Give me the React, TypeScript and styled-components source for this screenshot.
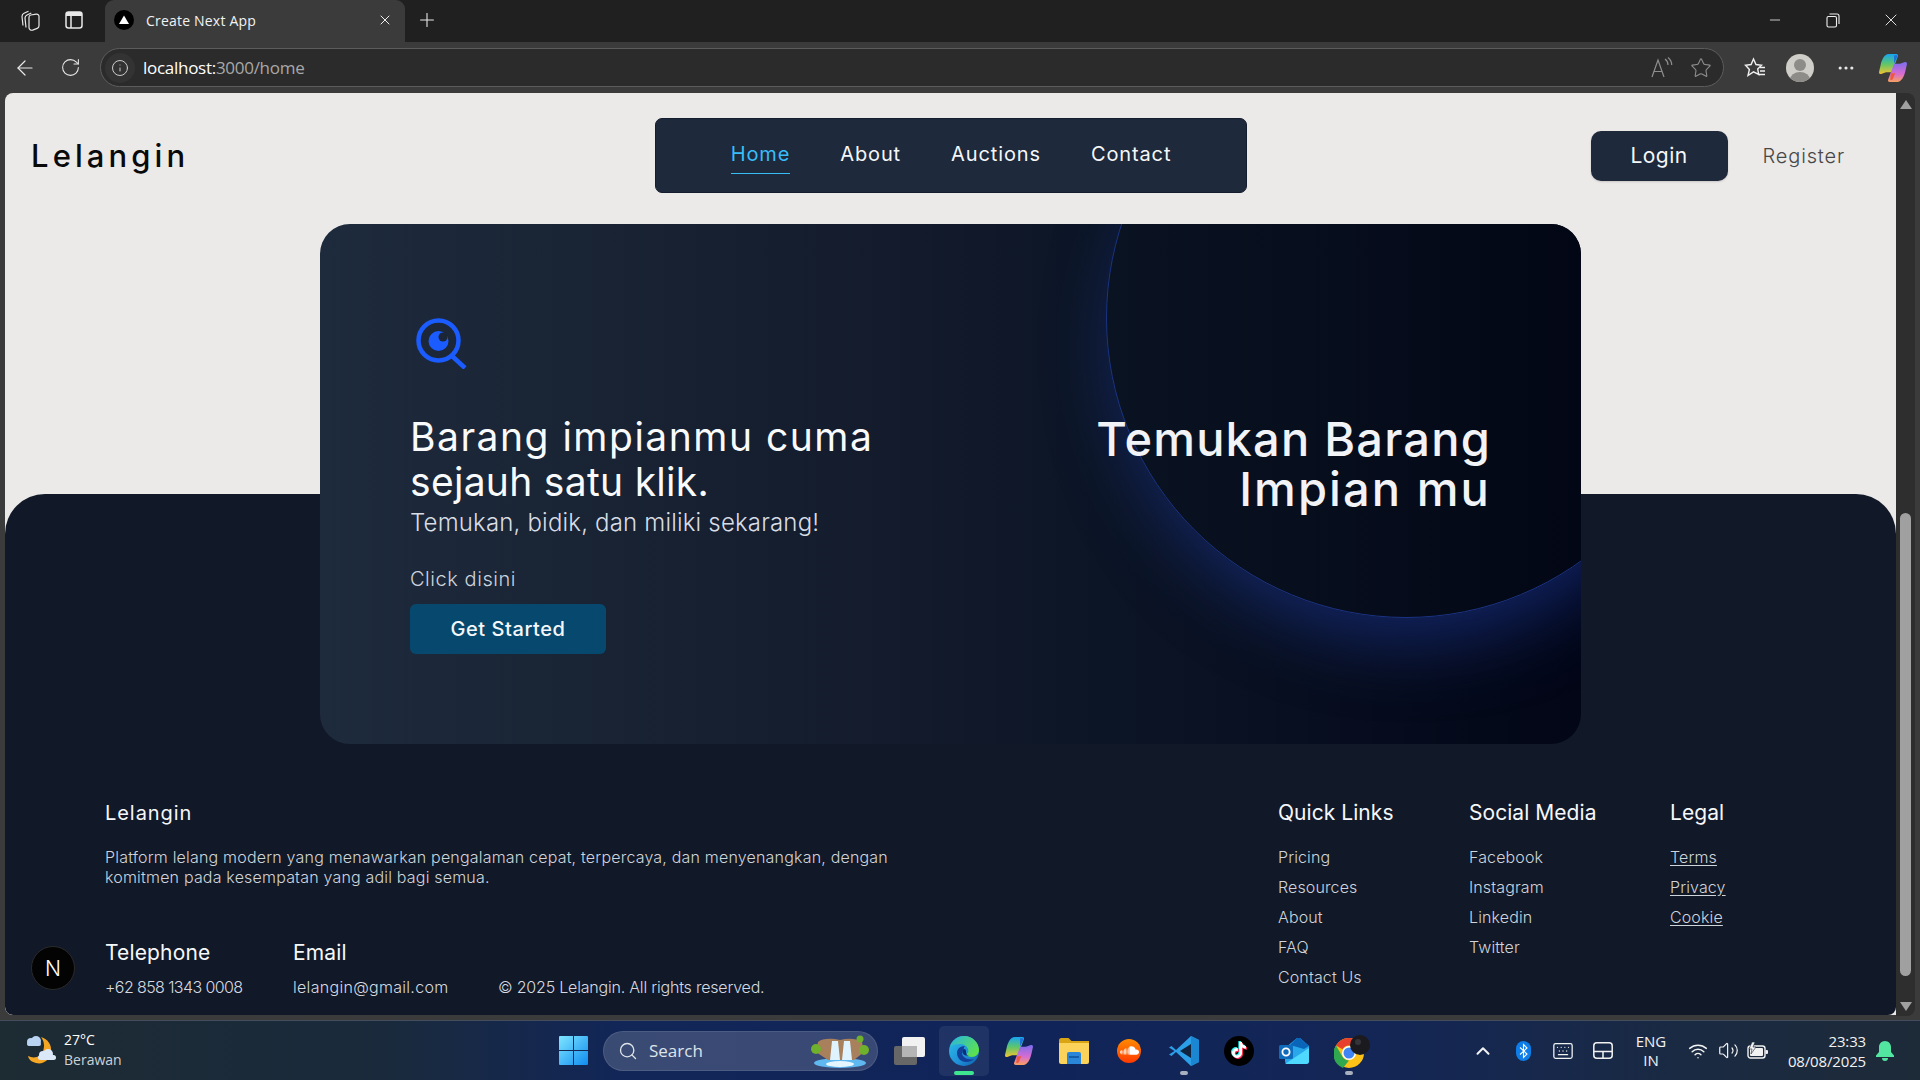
import React from "react";
import styled, { createGlobalStyle } from "styled-components";
import {
  ArrowLeft, RotateCw, Info, Plus, X, Minus, Star, Search, ChevronUp, Keyboard, Wifi, Volume2, MoreHorizontal,
} from "lucide-react";
import { SiSoundcloud, SiTiktok } from "react-icons/si";

const Global = createGlobalStyle`
  html, body { margin: 0; padding: 0; background: #3b3b3b; overflow: hidden; }
  * { box-sizing: border-box; }
`;

const PAGE_FONT = `Inter, "Noto Sans", sans-serif`;
const UI_FONT = `"Open Sans", "Noto Sans", sans-serif`;

const Frame = styled.div`
  width: 1920px; height: 1080px; display: flex; flex-direction: column; overflow: hidden;
  background: #3b3b3b; font-family: ${UI_FONT};
`;

/* ---------- browser chrome ---------- */
const TitleBar = styled.div`
  height: 42px; flex: none; background: #202020; display: flex; align-items: flex-end; color: #f0f0f0;
`;
const ChromeIcon = styled.div<{ $w: number; $color?: string }>`
  width: ${(p) => p.$w}px; height: 100%; flex: none; display: flex; align-items: center; justify-content: center;
  color: ${(p) => p.$color || "#e8e8e8"};
`;
const TitleLeft = styled.div`
  display: flex; height: 42px; width: 105px; flex: none; padding: 0 0 2px 8px;
`;
const Tab = styled.div`
  width: 300px; height: 42px; flex: none; background: #3b3b3b; border-radius: 9px 9px 0 0; display: flex; align-items: center;
  padding: 0 12px 2px 9px; gap: 12px;
`;
const TabTitle = styled.span`
  font-size: 14px; color: #f2f2f2; flex: 1; white-space: nowrap; letter-spacing: 0.2px;
`;
const NewTab = styled.div`
  width: 44px; height: 42px; padding-bottom: 2px; display: flex; align-items: center; justify-content: center; color: #e8e8e8;
`;
const WindowControls = styled.div`
  margin-left: auto; display: flex; height: 42px; padding-bottom: 2px;
`;
const WinButton = styled.div`
  width: 58px; height: 100%; display: flex; align-items: center; justify-content: center; color: #f0f0f0;
`;
const Toolbar = styled.div`
  height: 51px; flex: none; background: #3b3b3b; display: flex; align-items: center; color: #ececec;
`;
const NavIcons = styled.div`
  width: 100px; height: 100%; flex: none; display: flex; align-items: center; padding-left: 3px;
`;
const AddressBar = styled.div`
  width: 1624px; height: 39px; flex: none; background: #2b2b2b; border: 1px solid #5c5c5c; border-radius: 20px;
  display: flex; align-items: center; padding: 0 8px 0 3px;
`;
const InfoChip = styled.div`
  width: 30px; height: 30px; border-radius: 50%; background: #333333; flex: none; display: flex; align-items: center; justify-content: center;
  color: #cfcfcf; margin-left: 1px; margin-right: 8px;
`;
const UrlHost = styled.span`
  font-size: 17px; color: #ffffff; letter-spacing: -0.28px;
`;
const UrlPath = styled.span`
  font-size: 17px; color: #a8a8a8; letter-spacing: -0.28px;
`;
const AddressTools = styled.div`
  margin-left: auto; display: flex; align-items: center; gap: 16px; color: #8e8e8e; padding-right: 3px;
`;
const ToolbarRight = styled.div`
  flex: 1; display: flex; align-items: center; height: 100%; padding-left: 9px;
`;

/* ---------- viewport ---------- */
const Viewport = styled.div`
  flex: none; height: 927px; display: flex; padding-left: 5px; background: #3b3b3b;
`;
const Page = styled.div`
  width: 1891px; height: 922px; background: #ebeae8; border-radius: 8px 0 0 8px; display: flex; flex-direction: column;
  font-family: ${PAGE_FONT}; overflow: hidden;
`;
const ScrollTrack = styled.div`
  width: 19px; height: 923px; background: #2e2e2e; border-radius: 0 8px 8px 0; display: flex; flex-direction: column; align-items: center;
`;
const ScrollArrow = styled.div<{ $down?: boolean }>`
  width: 0; height: 0; border-left: 6px solid transparent; border-right: 6px solid transparent; flex: none;
  ${(p) => (p.$down ? "border-top: 9px solid #a0a0a0;" : "border-bottom: 9px solid #a0a0a0;")}
  margin-top: ${(p) => (p.$down ? "26px" : "7px")};
`;
const ScrollThumb = styled.div`
  width: 11px; height: 463px; border-radius: 6px; background: #a0a0a0; margin-top: 404px; flex: none;
`;

/* header */
const Header = styled.header`
  display: grid; grid-template-columns: 650px 592px 1fr; padding-top: 25px; flex: none;
`;
const Logo = styled.div`
  padding-left: 26px; height: 75px; display: flex; align-items: center; font-size: 31px; font-weight: 500; letter-spacing: 4.1px; color: #0a0a0a;
`;
const NavBox = styled.nav`
  height: 75px; background: #1e293b; border-radius: 7px; border: 1px solid #141d2e; display: flex; align-items: center; justify-content: center; gap: 50px;
`;
const NavLink = styled.a<{ $active?: boolean }>`
  font-size: 20px; line-height: 28px; padding-bottom: 5px; color: ${(p) => (p.$active ? "#38bdf8" : "#f5f7fa")};
  border-bottom: 1px solid ${(p) => (p.$active ? "#38bdf8" : "transparent")};
  margin-top: 2px; letter-spacing: 0.88px;
`;
const Actions = styled.div`
  height: 75px; display: flex; align-items: center; justify-content: flex-end; padding-right: 51px; gap: 35px;
`;
const LoginButton = styled.button`
  width: 137px; height: 50px; border: none; border-radius: 10px; background: #1e293b; color: #f5f7fa; font: 400 21px ${PAGE_FONT};
  box-shadow: 0 1px 2px rgba(0,0,0,.15); letter-spacing: 0.5px;
`;
const RegisterLink = styled.a`
  font-size: 20px; color: #474747; font-weight: 300; letter-spacing: 0.85px;
`;

/* hero */
const Hero = styled.section`
  position: relative; z-index: 1; flex: none; width: 1261px; height: 520px; margin: 31px 0 0 315px; border-radius: 30px; overflow: hidden;
  background: linear-gradient(90deg, #1e2b3c 0%, #131b2c 45%, #0c1526 62%, #020617 100%);
  display: flex; justify-content: space-between; padding: 94px 90px 0 90px; color: #fff;
`;
const Orb = styled.div`
  position: absolute; left: 786px; top: -206px; width: 600px; height: 600px; border-radius: 50%;
  background: linear-gradient(90deg, #0a1322, #020614 85%);
  border: 1px solid #1b3383; box-shadow: 6px 30px 70px -8px rgba(30,58,160,.55);
`;
const HeroLeft = styled.div`
  position: relative; display: flex; flex-direction: column; align-items: flex-start;
`;
const HeroIcon = styled.svg`
  width: 51px; height: 51px; margin-left: 6px; display: block;
`;
const HeroTitle = styled.h1`
  margin: 45px 0 0; font-size: 39px; line-height: 45px; font-weight: 400; color: #f8fafc;
`;
const SpacedLine = styled.span<{ $ls: number }>`
  display: block; white-space: nowrap; letter-spacing: ${(p) => p.$ls}px;
`;
const HeroSub = styled.p`
  margin: 5px 0 0; font-size: 24px; line-height: 28px; font-weight: 300; color: #d8dde5; letter-spacing: 0.18px;
`;
const HeroHint = styled.p`
  margin: 28px 0 0; font-size: 20px; line-height: 28px; font-weight: 300; color: #cdd3dc; letter-spacing: 0.55px;
`;
const HeroButton = styled.button`
  margin-top: 11px; width: 196px; height: 50px; background: #07496e; color: #f5f7fa; border: none; border-radius: 6px;
  font: 500 20px ${PAGE_FONT}; letter-spacing: 0.55px;
`;
const HeroHeadline = styled.h2`
  position: relative; margin: 96px 0 0; font-size: 47px; line-height: 50px; font-weight: 500; color: #f1f3f7; text-align: right;
`;

/* footer */
const Footer = styled.footer`
  flex: 1; margin: -250px 0 0; background: #111827; border-radius: 40px 40px 8px 8px; padding: 309px 0 0 26px;
  display: flex; color: #f5f7fa;
`;
const FooterLeft = styled.div`
  width: 1247px; flex: none; display: flex; flex-direction: column;
`;
const Brand = styled.div`
  margin-left: 74px;
`;
const FooterHeading = styled.h3`
  margin: 0; font-size: 20px; line-height: 20px; font-weight: 400; letter-spacing: 0.95px; color: #f5f7fa;
`;
const Description = styled.p`
  margin: 24px 0 0; width: 800px; font-size: 16px; line-height: 20px; font-weight: 300; color: #cfd4db; letter-spacing: 0.19px;
`;
const ContactRow = styled.div`
  margin-top: 54px; display: grid; grid-template-columns: 74px 188px 205px auto; align-items: end;
`;
const NBadge = styled.div`
  width: 44px; height: 44px; border-radius: 50%; background: #030303; border: 1px solid #2a2a2a; color: #fff; display: flex; align-items: center; justify-content: center;
  font-size: 21px; font-weight: 300; align-self: start; margin-top: 5px;
`;
const ContactHeading = styled.h4`
  margin: 0 0 12px; font-size: 21px; line-height: 24px; font-weight: 400; color: #f5f7fa; letter-spacing: 0.15px;
`;
const SmallText = styled.span<{ $ls: number }>`
  display: block; font-size: 16px; line-height: 20px; font-weight: 300; color: #d6dae0; letter-spacing: ${(p) => p.$ls}px;
`;
const LinkColumns = styled.div`
  display: grid; grid-template-columns: 191px 201px 1fr; flex: 1;
`;
const LinkColumn = styled.div`
  display: flex; flex-direction: column; gap: 10px;
`;
const ColumnHeading = styled(FooterHeading)`
  font-size: 21px; margin-bottom: 14px; letter-spacing: 0.05px;
`;
const FooterLink = styled.a<{ $underline?: boolean }>`
  font-size: 16px; line-height: 20px; font-weight: 300; color: #cfd4db; letter-spacing: 0.12px;
  text-decoration: ${(p) => (p.$underline ? "underline" : "none")}; text-underline-offset: 2px; align-self: flex-start;
`;

/* ---------- taskbar ---------- */
const Taskbar = styled.div`
  flex: none; height: 60px; display: flex; align-items: center; border-top: 1px solid #434d5c; color: #fff;
  background: linear-gradient(90deg, #1d2b33 0%, #1a2a3c 20%, #122657 32%, #10245a 52%, #132655 72%, #1a2a42 88%, #1d2a38 100%);
`;
const TaskLeft = styled.div`
  width: 548px; flex: none; display: flex; align-items: center; padding-left: 23px; gap: 5px;
`;
const WeatherText = styled.div`
  display: flex; flex-direction: column; font-size: 14px; line-height: 20px; margin-top: -2px; letter-spacing: 0;
`;
const WeatherSub = styled.span`
  color: #cdd2d8;
`;
const TaskCenter = styled.div`
  display: flex; align-items: center; gap: 5px;
`;
const TaskSlot = styled.div<{ $active?: boolean; $mark?: string }>`
  position: relative; width: 50px; height: 50px; flex: none; display: flex; align-items: center; justify-content: center; border-radius: 5px;
  background: ${(p) => (p.$active ? "rgba(255,255,255,.07)" : "transparent")};
  &::after {
    content: ""; display: ${(p) => (p.$mark ? "block" : "none")}; position: absolute; bottom: 1px; left: 50%; transform: translateX(-50%);
    width: ${(p) => (p.$active ? "20px" : "8px")}; height: 4px; border-radius: 2px; background: ${(p) => p.$mark};
  }
`;
const SearchPill = styled.div`
  width: 275px; height: 40px; margin-right: 1px; border-radius: 20px; background: rgba(255,255,255,.17); border: 1px solid rgba(255,255,255,.1);
  display: flex; align-items: center; padding-left: 14px; gap: 11px; color: #dfe3ea; font-size: 17px; overflow: hidden;
`;
const PillArt = styled.svg`
  margin-left: auto; margin-right: 7px; width: 60px; height: 34px; flex: none;
`;
const TaskRight = styled.div`
  margin-left: auto; display: flex; align-items: center; height: 100%; padding-right: 16px;
`;
const TrayIcon = styled.div<{ $w: number }>`
  width: ${(p) => p.$w}px; flex: none; display: flex; align-items: center; justify-content: center; color: #f2f2f2;
`;
const LangBox = styled.div`
  width: 56px; margin-right: 4px; flex: none; text-align: center; font-size: 15px; line-height: 19px; color: #f2f2f2;
`;
const ClockBox = styled.div`
  width: 93px; flex: none; text-align: right; font-size: 15px; line-height: 20px; color: #f2f2f2; letter-spacing: -0.15px;
`;

/* drawings */
const Workspaces = () => (
  <svg width="22" height="22" viewBox="0 0 22 22" fill="none" stroke="#e8e8e8" strokeWidth="1.2">
    <path d="M4 16.5 3 7.5c0-1.5.7-2.6 2-3.2l4.5-2" />
    <path d="M7 18.5 6 9c0-1.4.7-2.4 2-3l4.3-2" />
    <path d="M10 8.2c0-1.1.7-2 1.8-2.2l5.5-.8c1.5-.2 2.7.8 2.7 2.3v9.3c0 1.2-.7 2.2-1.8 2.6l-4.6 1.7c-1.8.6-3.6-.6-3.6-2.5z" />
  </svg>
);
const VerticalTabs = () => (
  <svg width="20" height="20" viewBox="0 0 20 20" fill="none">
    <rect x="2" y="2" width="16" height="16" rx="2.5" stroke="#e8e8e8" strokeWidth="1.5" />
    <path d="M2 4.5A2.5 2.5 0 0 1 4.5 2h11A2.5 2.5 0 0 1 18 4.5V6H2z" fill="#e8e8e8" />
    <path d="M7 6v12" stroke="#e8e8e8" strokeWidth="1.5" />
  </svg>
);
const Favicon = () => (
  <svg width="20" height="20" viewBox="0 0 20 20">
    <circle cx="10" cy="10" r="10" fill="#000" />
    <path d="M10 5.5 15 14H5z" fill="#fff" />
  </svg>
);
const Restore = () => (
  <svg width="14" height="15" viewBox="0 0 14 15" fill="none" stroke="#f0f0f0" strokeWidth="1.1">
    <rect x="1" y="3.5" width="9.5" height="10.5" rx="1.5" />
    <path d="M3.5 1H11a2 2 0 0 1 2 2v8" />
  </svg>
);
const ReadAloud = () => (
  <svg width="24" height="24" viewBox="0 0 24 24" fill="none" stroke="#8e8e8e" strokeWidth="1.2">
    <path d="M2 21 8 4l6 17M4 15.5h8" />
    <path d="M15 3c2 1.5 3 3.5 3 6M18 1.5c2.500 2 3.700 4.500 3.700 7.500" />
  </svg>
);
const Favorites = () => (
  <svg width="24" height="24" viewBox="0 0 24 24" fill="none" stroke="#f0f0f0" strokeWidth="1.4">
    <path d="M10.500 3 13 8.500l5.500.7-3.800 3.800 1 5.500-5.200-2.600L5 19.500l1.400-6L2.500 9.300l5.600-.8z" />
    <path d="M17 11.500h5M17 15h5M15.500 18.500h6.500" />
  </svg>
);
const Avatar = () => (
  <svg width="28" height="28" viewBox="0 0 28 28">
    <clipPath id="avatarClip"><circle cx="14" cy="14" r="14" /></clipPath>
    <g clipPath="url(#avatarClip)">
      <rect width="28" height="28" fill="#cfcec9" />
      <circle cx="14" cy="11" r="6" fill="#8d8c88" />
      <ellipse cx="14" cy="26" rx="10" ry="8" fill="#8d8c88" />
    </g>
  </svg>
);
const Copilot = ({ size = 28, id }: { size?: number; id: string }) => (
  <svg width={size} height={size} viewBox="0 0 28 28">
    <defs>
      <linearGradient id={id + "a"} x1="0" y1="0" x2="0" y2="1">
        <stop offset="0" stopColor="#18a5f0" /><stop offset=".5" stopColor="#5fc66a" /><stop offset="1" stopColor="#f2c230" />
      </linearGradient>
      <linearGradient id={id + "b"} x1="0" y1="0" x2="0" y2="1">
        <stop offset="0" stopColor="#7a6df0" /><stop offset=".6" stopColor="#d86cd0" /><stop offset="1" stopColor="#f7a060" />
      </linearGradient>
    </defs>
    <path d="M10 1h7c1.500 0 2 1 1.500 2.200L13 18H7.500L3 19.500C1.500 20 .8 19 1 17.500L2.500 11C3.500 6.500 6 1 10 1z" fill={`url(#${id}a)`} />
    <path d="M18 27h-7c-1.500 0-2-1-1.500-2.200L15 10h5.500l4.500-1.500c1.500-.5 2.200.5 2 2L25.500 17c-1 4.500-3.500 10-7.500 10z" fill={`url(#${id}b)`} />
    <path d="M12 19h4l-2 5c-.500 1-1.500 1.500-2.500 1.200z" fill="#ef5a3c" />
    <path d="M15 10l3-6.500c.4-.9 0-1.500-1-1.500h-2z" fill="#1d6fe0" />
  </svg>
);
const Weather = () => (
  <svg width="36" height="36" viewBox="0 0 36 36">
    <path d="M18 4c7 2 11 8 10 15-1 8-8 13-15 11-4-1-7-3-8-7 6 3 13 1 15-5 2-5 1-10-2-14z" fill="#f5a623" />
    <g fill="#b9d3f2"><circle cx="8" cy="9" r="4" /><circle cx="13" cy="8" r="5" /><rect x="4" y="9" width="14" height="4" rx="2" /></g>
    <g fill="#dbe8f8"><circle cx="20" cy="22" r="4" /><circle cx="25" cy="21" r="5" /><rect x="15" y="22" width="18" height="5" rx="2.500" /></g>
  </svg>
);
const WindowsLogo = () => (
  <svg width="29" height="29" viewBox="0 0 29 29">
    <defs>
      <linearGradient id="winG" x1="0" y1="0" x2="1" y2="1"><stop offset="0" stopColor="#7fe6ff" /><stop offset="1" stopColor="#0f8cf0" /></linearGradient>
    </defs>
    <path d="M1 0h13v14H0V1a1 1 0 0 1 1-1zM15 0h13a1 1 0 0 1 1 1v13H15zM0 15h14v14H1a1 1 0 0 1-1-1zM15 15h14v13a1 1 0 0 1-1 1H15z" fill="url(#winG)" />
  </svg>
);
const TaskView = () => (
  <svg width="31" height="28" viewBox="0 0 31 28">
    <rect x="0" y="9" width="23" height="19" rx="2" fill="#676767" />
    <rect x="8" y="0" width="23" height="20" rx="2" fill="#f2f2f2" />
    <rect x="8" y="9" width="15" height="11" fill="#b5b5b5" />
  </svg>
);
const Edge = () => (
  <svg width="30" height="30" viewBox="0 0 30 30">
    <defs>
      <linearGradient id="edgeA" x1="0" y1="0" x2="1" y2="1"><stop offset="0" stopColor="#2cc0e8" /><stop offset=".6" stopColor="#1f8fd8" /><stop offset="1" stopColor="#0c59a4" /></linearGradient>
      <linearGradient id="edgeB" x1="0" y1="0" x2="1" y2="0.6"><stop offset="0" stopColor="#27b4e6" /><stop offset="1" stopColor="#5ce04f" /></linearGradient>
    </defs>
    <circle cx="15" cy="15" r="15" fill="url(#edgeA)" />
    <path d="M1 11C3 4 9 0 15 0c9 0 15 7 15 14 0 4-3 7-7 7-3 0-5-1-6-2.500 2-1 3-3 2-5.500-1-3-4-5-8-5C7 8 3 9 1 11z" fill="url(#edgeB)" />
    <path d="M16 10c-5 0-8 3-8 7 0 5 4 9 9 9 3 0 6-1 8-3-2 .6-4 .6-6 0-3-.8-6-3-6-6 0-1.500.8-2.500 2-3.500-.5-1.500 0-2.500 1-3.500z" fill="#123f9a" />
    <path d="M16 13c-2 .4-3 2-2.600 3.600C14 19 17 20 20 20c-2-1-3-2-3-4 0-1 0-2-1-3z" fill="#0d2f7a" />
  </svg>
);
const Folder = () => (
  <svg width="30" height="26" viewBox="0 0 30 26">
    <path d="M0 2.500A2.500 2.500 0 0 1 2.500 0h7l3 3H30v4H0z" fill="#d9a514" />
    <path d="M0 5h30v19a2 2 0 0 1-2 2H2a2 2 0 0 1-2-2z" fill="#fbd25a" />
    <path d="M8 16a2 2 0 0 1 2-2h10a2 2 0 0 1 2 2v10H8z" fill="#2a86d8" />
    <path d="M10 19h10" stroke="#0f4f9a" strokeWidth="1.5" />
  </svg>
);
const SoundDisc = styled.div`
  width: 24px; height: 24px; border-radius: 50%; background: linear-gradient(180deg, #ff8a00, #ff3a00); display: flex; align-items: center; justify-content: center;
`;
const Soundcloud = () => (
  <SoundDisc><SiSoundcloud size={19} color="#ffffff" /></SoundDisc>
);
const VsCode = () => (
  <svg width="30" height="30" viewBox="0 0 30 30">
    <path d="M22 0 30 4v22l-8 4L7 16 2.500 20 0 18.500 5.500 15 0 11.500 2.500 10 7 14z" fill="#2b9fe8" />
    <path d="M22 0 30 4v22l-8 4z" fill="#1b86d2" />
    <path d="M22 8 11 15l11 7z" fill="#10243f" />
  </svg>
);
const TikTokDisc = styled.div`
  position: relative; width: 30px; height: 30px; border-radius: 50%; background: #000; display: flex; align-items: center; justify-content: center;
`;
const TikTokLayer = styled.span<{ $dx: number; $color: string }>`
  position: absolute; left: ${(p) => 7 + p.$dx}px; top: ${(p) => 6 + p.$dx}px; color: ${(p) => p.$color}; display: flex;
`;
const TikTok = () => (
  <TikTokDisc>
    <TikTokLayer $dx={-1} $color="#25f4ee"><SiTiktok size={16} /></TikTokLayer>
    <TikTokLayer $dx={1} $color="#fe2c55"><SiTiktok size={16} /></TikTokLayer>
    <TikTokLayer $dx={0} $color="#ffffff"><SiTiktok size={16} /></TikTokLayer>
  </TikTokDisc>
);
const Outlook = () => (
  <svg width="30" height="26" viewBox="0 0 30 26">
    <path d="M6 10 18 0c1-.8 2-.8 3 0l9 8v15a3 3 0 0 1-3 3H9a3 3 0 0 1-3-3z" fill="#28a8ea" />
    <path d="M18 0c1-.8 2-.8 3 0l9 8-5 3-14-4z" fill="#0a64b8" />
    <path d="M6 26 30 10v13a3 3 0 0 1-3 3z" fill="#50d9ff" />
    <rect x="0" y="7" width="14" height="14" rx="1.500" fill="#0f6cbd" />
    <circle cx="7" cy="14" r="3.600" fill="none" stroke="#fff" strokeWidth="1.800" />
  </svg>
);
const ChromeArt = styled.svg`
  margin-left: 10px; flex: none;
`;
const Chrome = () => (
  <ChromeArt width="40" height="34" viewBox="0 0 40 34">
    <g transform="translate(0 4)">
      <circle cx="15" cy="15" r="15" fill="#fbc116" />
      <path d="M15 0a15 15 0 0 1 13 7.500H15a7.500 7.500 0 0 0-6.500 3.800L2 7.500A15 15 0 0 1 15 0z" fill="#e8402f" />
      <path d="M2 7.500l6.500 11.300A7.500 7.500 0 0 0 15 22.500L9 30A15 15 0 0 1 2 7.500z" fill="#2fa84f" />
      <circle cx="15" cy="15" r="7" fill="#fff" />
      <circle cx="15" cy="15" r="5.500" fill="#3f85f4" />
    </g>
    <circle cx="26" cy="11" r="10" fill="#1b1b1f" />
    <circle cx="24" cy="8" r="3" fill="#34343a" />
  </ChromeArt>
);
const WaterfallArt = () => (
  <PillArt viewBox="0 0 60 34">
    <ellipse cx="30" cy="29" rx="26" ry="5" fill="#5fb8f0" />
    <path d="M8 8c4-4 14-4 22-2 8-2 16-2 22 2l2 10-10 8H18L6 18z" fill="#a8805c" />
    <path d="M22 7h6l2 19h-10zM34 7h6l2 19H32z" fill="#dff3ff" />
    <circle cx="6" cy="15" r="5" fill="#6fb02c" /><circle cx="54" cy="16" r="5" fill="#6fb02c" /><circle cx="50" cy="5" r="3.500" fill="#6fb02c" />
    <ellipse cx="30" cy="30" rx="14" ry="3" fill="#e5f6ff" />
  </PillArt>
);
const Bluetooth = () => (
  <svg width="15" height="20" viewBox="0 0 15 20">
    <rect width="15" height="20" rx="7.500" fill="#0f7de8" />
    <path d="M4 6.500l7 6.500-3.500 3.500v-13L11 7l-7 6.500" fill="none" stroke="#fff" strokeWidth="1.100" />
  </svg>
);
const TrackPad = () => (
  <svg width="20" height="17" viewBox="0 0 20 17" fill="none" stroke="#f2f2f2" strokeWidth="1.500">
    <rect x=".8" y=".8" width="18.400" height="15.400" rx="3" /><path d="M.8 9.500h18.400M10 9.500v6.700" />
  </svg>
);
const Battery = () => (
  <svg width="22" height="18" viewBox="0 0 22 18" fill="none">
    <rect x="1" y="4" width="17" height="12" rx="2.500" stroke="#f2f2f2" strokeWidth="1.400" />
    <rect x="3" y="6" width="13" height="8" rx="1" fill="#f2f2f2" />
    <rect x="18.500" y="8" width="2.500" height="4" rx="1" fill="#f2f2f2" />
    <path d="M5 0 2 7h3l-1 5 5-7H6l2-5z" fill="#f2f2f2" stroke="#1b2a3c" strokeWidth=".6" />
  </svg>
);
const Bell = () => (
  <svg width="18" height="20" viewBox="0 0 18 20">
    <path d="M9 0c3.500 0 6 2.800 6 6v5l3 3.500V16H0v-1.500L3 11V6c0-3.200 2.500-6 6-6z" fill="#52e6a0" />
    <path d="M6 17h6a3 3 0 0 1-6 0z" fill="#52e6a0" />
  </svg>
);

export default function App() {
  return (
    <>
      <Global />
      <Frame>
        <TitleBar>
          <TitleLeft>
            <ChromeIcon $w={44}><Workspaces /></ChromeIcon>
            <ChromeIcon $w={44}><VerticalTabs /></ChromeIcon>
          </TitleLeft>
          <Tab>
            <Favicon />
            <TabTitle>Create Next App</TabTitle>
            <X size={16} strokeWidth={1.5} color="#f0f0f0" />
          </Tab>
          <NewTab><Plus size={22} strokeWidth={1.2} /></NewTab>
          <WindowControls>
            <WinButton><Minus size={16} strokeWidth={1.2} /></WinButton>
            <WinButton><Restore /></WinButton>
            <WinButton><X size={20} strokeWidth={1.1} /></WinButton>
          </WindowControls>
        </TitleBar>

        <Toolbar>
          <NavIcons>
            <ChromeIcon $w={44}><ArrowLeft size={24} strokeWidth={1.2} /></ChromeIcon>
            <ChromeIcon $w={46}><RotateCw size={21} strokeWidth={1.2} /></ChromeIcon>
          </NavIcons>
          <AddressBar>
            <InfoChip><Info size={18} strokeWidth={1.3} /></InfoChip>
            <UrlHost>localhost:</UrlHost><UrlPath>3000/home</UrlPath>
            <AddressTools>
              <ReadAloud />
              <Star size={22} strokeWidth={1.2} />
            </AddressTools>
          </AddressBar>
          <ToolbarRight>
            <ChromeIcon $w={44}><Favorites /></ChromeIcon>
            <ChromeIcon $w={46}><Avatar /></ChromeIcon>
            <ChromeIcon $w={46}><MoreHorizontal size={20} strokeWidth={1.8} /></ChromeIcon>
            <ChromeIcon $w={48}><Copilot id="cpA" size={30} /></ChromeIcon>
          </ToolbarRight>
        </Toolbar>

        <Viewport>
          <Page>
            <Header>
              <Logo>Lelangin</Logo>
              <NavBox>
                <NavLink $active>Home</NavLink>
                <NavLink>About</NavLink>
                <NavLink>Auctions</NavLink>
                <NavLink>Contact</NavLink>
              </NavBox>
              <Actions>
                <LoginButton>Login</LoginButton>
                <RegisterLink>Register</RegisterLink>
              </Actions>
            </Header>

            <Hero>
              <Orb />
              <HeroLeft>
                <HeroIcon viewBox="0 0 51 51" fill="none">
                  <circle cx="22.500" cy="22.500" r="20" stroke="#1a5cff" strokeWidth="4.500" />
                  <circle cx="22.500" cy="23" r="10" fill="#1a5cff" />
                  <circle cx="27" cy="19" r="4.500" fill="#1a2536" />
                  <path d="M36 38l13 12" stroke="#1a5cff" strokeWidth="4.500" />
                </HeroIcon>
                <HeroTitle>
                  <SpacedLine $ls={1.5}>Barang impianmu cuma</SpacedLine>
                  <SpacedLine $ls={0.3}>sejauh satu klik.</SpacedLine>
                </HeroTitle>
                <HeroSub>Temukan, bidik, dan miliki sekarang!</HeroSub>
                <HeroHint>Click disini</HeroHint>
                <HeroButton>Get Started</HeroButton>
              </HeroLeft>
              <HeroHeadline>
                <SpacedLine $ls={1.2}>Temukan Barang</SpacedLine>
                <SpacedLine $ls={2.1}>Impian mu</SpacedLine>
              </HeroHeadline>
            </Hero>

            <Footer>
              <FooterLeft>
                <Brand>
                  <FooterHeading>Lelangin</FooterHeading>
                  <Description>Platform lelang modern yang menawarkan pengalaman cepat, terpercaya, dan menyenangkan, dengan komitmen pada kesempatan yang adil bagi semua.</Description>
                </Brand>
                <ContactRow>
                  <NBadge>N</NBadge>
                  <div>
                    <ContactHeading>Telephone</ContactHeading>
                    <SmallText $ls={-0.6}>+62 858 1343 0008</SmallText>
                  </div>
                  <div>
                    <ContactHeading>Email</ContactHeading>
                    <SmallText $ls={0.3}>lelangin@gmail.com</SmallText>
                  </div>
                  <SmallText $ls={-0.2}>© 2025 Lelangin. All rights reserved.</SmallText>
                </ContactRow>
              </FooterLeft>
              <LinkColumns>
                <LinkColumn>
                  <ColumnHeading>Quick Links</ColumnHeading>
                  <FooterLink>Pricing</FooterLink>
                  <FooterLink>Resources</FooterLink>
                  <FooterLink>About</FooterLink>
                  <FooterLink>FAQ</FooterLink>
                  <FooterLink>Contact Us</FooterLink>
                </LinkColumn>
                <LinkColumn>
                  <ColumnHeading>Social Media</ColumnHeading>
                  <FooterLink>Facebook</FooterLink>
                  <FooterLink>Instagram</FooterLink>
                  <FooterLink>Linkedin</FooterLink>
                  <FooterLink>Twitter</FooterLink>
                </LinkColumn>
                <LinkColumn>
                  <ColumnHeading>Legal</ColumnHeading>
                  <FooterLink $underline>Terms</FooterLink>
                  <FooterLink $underline>Privacy</FooterLink>
                  <FooterLink $underline>Cookie</FooterLink>
                </LinkColumn>
              </LinkColumns>
            </Footer>
          </Page>
          <ScrollTrack>
            <ScrollArrow />
            <ScrollThumb />
            <ScrollArrow $down />
          </ScrollTrack>
        </Viewport>

        <Taskbar>
          <TaskLeft>
            <Weather />
            <WeatherText>
              <span>27°C</span>
              <WeatherSub>Berawan</WeatherSub>
            </WeatherText>
          </TaskLeft>
          <TaskCenter>
            <TaskSlot><WindowsLogo /></TaskSlot>
            <SearchPill>
              <Search size={20} strokeWidth={1.6} />
              <span>Search</span>
              <WaterfallArt />
            </SearchPill>
            <TaskSlot><TaskView /></TaskSlot>
            <TaskSlot $active $mark="#3ee68f"><Edge /></TaskSlot>
            <TaskSlot><Copilot size={30} id="cpB" /></TaskSlot>
            <TaskSlot><Folder /></TaskSlot>
            <TaskSlot><Soundcloud /></TaskSlot>
            <TaskSlot $mark="#a9b0bd"><VsCode /></TaskSlot>
            <TaskSlot><TikTok /></TaskSlot>
            <TaskSlot><Outlook /></TaskSlot>
            <TaskSlot $mark="#a9b0bd"><Chrome /></TaskSlot>
          </TaskCenter>
          <TaskRight>
            <TrayIcon $w={40}><ChevronUp size={22} strokeWidth={2.2} /></TrayIcon>
            <TrayIcon $w={40}><Bluetooth /></TrayIcon>
            <TrayIcon $w={40}><Keyboard size={22} strokeWidth={1.4} /></TrayIcon>
            <TrayIcon $w={40}><TrackPad /></TrayIcon>
            <LangBox>ENG<br />IN</LangBox>
            <TrayIcon $w={30}><Wifi size={20} strokeWidth={1.8} /></TrayIcon>
            <TrayIcon $w={30}><Volume2 size={21} strokeWidth={1.4} /></TrayIcon>
            <TrayIcon $w={30}><Battery /></TrayIcon>
            <ClockBox>23:33<br />08/08/2025</ClockBox>
            <TrayIcon $w={38}><Bell /></TrayIcon>
          </TaskRight>
        </Taskbar>
      </Frame>
    </>
  );
}
